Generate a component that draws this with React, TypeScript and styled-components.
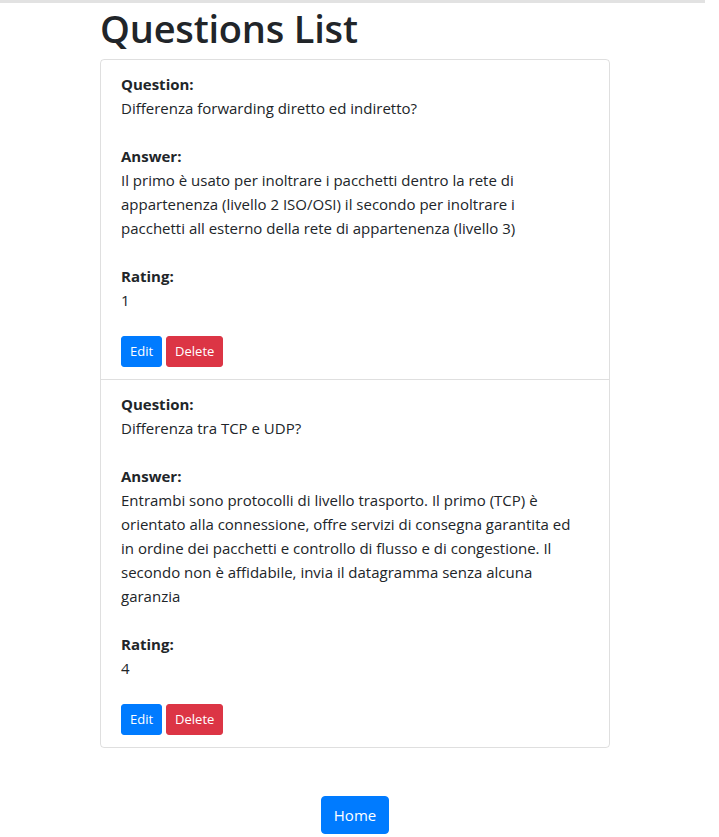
import * as React from 'react';
import styled, { createGlobalStyle } from 'styled-components';

interface Question {
	id: number;
	question: string;
	answer: string;
	rating: number;
}

const questions: Question[] = [
	{
		id: 1,
		question: 'Differenza forwarding diretto ed indiretto?',
		answer: 'Il primo è usato per inoltrare i pacchetti dentro la rete di\nappartenenza (livello 2 ISO/OSI) il secondo per inoltrare i\npacchetti all esterno della rete di appartenenza (livello 3)',
		rating: 1,
	},
	{
		id: 2,
		question: 'Differenza tra TCP e UDP?',
		answer: 'Entrambi sono protocolli di livello trasporto. Il primo (TCP) è\norientato alla connessione, offre servizi di consegna garantita ed\nin ordine dei pacchetti e controllo di flusso e di congestione. Il\nsecondo non è affidabile, invia il datagramma senza alcuna\ngaranzia',
		rating: 4,
	},
];

const GlobalStyle = createGlobalStyle`
	html, body {
		margin: 0;
		padding: 0;
		background: #fff;
	}
	body {
		font-family: "Open Sans", "Noto Sans", sans-serif;
		font-size: 15px;
		line-height: 24px;
		color: #212529;
	}
	* {
		box-sizing: border-box;
	}
`;

const TopRule = styled.div`
	width: 705px;
	height: 3px;
	background: #e2e2e2;
`;

const Container = styled.div`
	width: 510px;
	margin-left: 100px;
	display: flex;
	flex-direction: column;
`;

const Title = styled.h1`
	margin: 0 0 8px 0;
	font-size: 38px;
	line-height: 48px;
	font-weight: 600;
	letter-spacing: -0.2px;
	padding-top: 1px;
	height: 48px;
`;

const ListGroup = styled.ul`
	list-style: none;
	margin: 0;
	padding: 0;
	border: 1px solid rgba(0, 0, 0, 0.125);
	border-radius: 4px;
`;

const ListItem = styled.li`
	padding: 12px 20px;
	& + & {
		border-top: 1px solid rgba(0, 0, 0, 0.125);
	}
`;

const Field = styled.div`
	margin-bottom: 24px;
`;

const Label = styled.div`
	font-weight: 700;
`;

const Value = styled.div`
	white-space: pre-line;
`;

const ButtonRow = styled.div`
	display: flex;
	gap: 4px;
`;

const Button = styled.button<{ $variant: 'primary' | 'danger'; $size?: 'sm' | 'md' }>`
	font-family: inherit;
	border: 1px solid ${props => props.$variant === 'primary' ? '#007bff' : '#dc3545'};
	background: ${props => props.$variant === 'primary' ? '#007bff' : '#dc3545'};
	color: #fff;
	cursor: pointer;
	font-size: ${props => props.$size === 'md' ? '15px' : '13px'};
	line-height: ${props => props.$size === 'md' ? '24px' : '21px'};
	padding: ${props => props.$size === 'md' ? '6px 12px' : '4px 8px'};
	border-radius: ${props => props.$size === 'md' ? '4px' : '3px'};
	height: ${props => props.$size === 'md' ? '38px' : '31px'};
`;

const Footer = styled.div`
	display: flex;
	justify-content: center;
	padding-top: 48px;
`;

export default function App() {
	return (
		<>
			<GlobalStyle />
			<TopRule />
			<Container>
				<Title>Questions List</Title>
				<ListGroup>
					{questions.map(q => (
						<ListItem key={q.id}>
							<Field>
								<Label>Question:</Label>
								<Value>{q.question}</Value>
							</Field>
							<Field>
								<Label>Answer:</Label>
								<Value>{q.answer}</Value>
							</Field>
							<Field>
								<Label>Rating:</Label>
								<Value>{q.rating}</Value>
							</Field>
							<ButtonRow>
								<Button $variant="primary">Edit</Button>
								<Button $variant="danger">Delete</Button>
							</ButtonRow>
						</ListItem>
					))}
				</ListGroup>
				<Footer>
					<Button $variant="primary" $size="md">Home</Button>
				</Footer>
			</Container>
		</>
	);
}
